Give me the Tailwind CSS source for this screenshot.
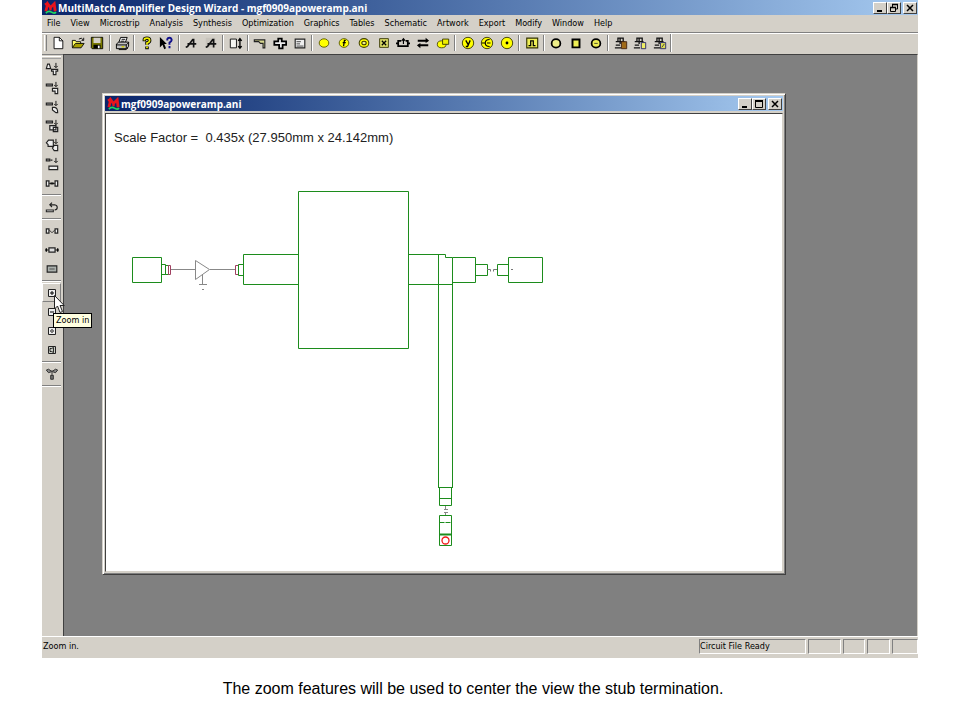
<!DOCTYPE html>
<html lang="en">
<head>
    <meta charset="UTF-8">
    <meta name="viewport" content="width=device-width, initial-scale=1.0">
    <title>MultiMatch Amplifier Design Wizard</title>
    <script src="https://cdn.jsdelivr.net/npm/@tailwindcss/browser@4"></script>
</head>
<body class="min-h-screen flex flex-col bg-white text-black">

    <!-- Shared logo -->
    <svg class="hidden">
        <symbol id="logo" viewBox="0 0 14 14">
            <path d="M2 11L4 3L7 7L11 3L12 11" fill="none" stroke="#e8141c" stroke-width="3"/>
            <path d="M1 4L4 2M7 6V10" stroke="#e8141c" stroke-width="2.5"/>
            <path d="M2 13Q5 10 8 12T13 12" fill="none" stroke="#20d860" stroke-width="1.8"/>
        </symbol>
    </svg>

    <!-- Application window -->
    <main class="mx-[42px] flex-1 flex flex-col bg-[#d4d0c8] text-[9px] font-['DejaVu_Sans_Condensed','DejaVu_Sans',sans-serif]">

        <!-- Title bar -->
        <header class="h-[15px] flex items-center bg-linear-to-r from-[#0a246a] to-[#a6caf0] pl-[2px] pr-[1px] text-white">
            <svg class="size-[13px] mr-[1px]"><use href="#logo"/></svg>
            <h1 class="text-[10px] leading-[14px] font-bold whitespace-nowrap font-['Open_Sans',sans-serif]">MultiMatch Amplifier Design Wizard - mgf0909apoweramp.ani</h1>
            <div class="ml-auto flex text-black">
                <button aria-label="Minimize" class="w-[14px] h-3 bg-[#d4d0c8] border border-t-white border-l-white border-b-[#404040] border-r-[#404040]"><svg class="w-3 h-[10px]" viewBox="0 0 12 10"><path d="M3 8H8" stroke="#000" stroke-width="2"/></svg></button>
                <button aria-label="Restore" class="w-[14px] h-3 bg-[#d4d0c8] border border-t-white border-l-white border-b-[#404040] border-r-[#404040]"><svg class="w-3 h-[10px]" viewBox="0 0 12 10"><path d="M4.5 4V1.5H9.5V6H8M2.5 4.5H7.5V8.5H2.5Z" fill="none" stroke="#000"/><path d="M4 1.5H10M2 4.5H8" stroke="#000" stroke-width="1.6"/></svg></button>
                <button aria-label="Close" class="ml-[2px] w-[14px] h-3 bg-[#d4d0c8] border border-t-white border-l-white border-b-[#404040] border-r-[#404040]"><svg class="w-3 h-[10px]" viewBox="0 0 12 10"><path d="M3 2L9 8M9 2L3 8" stroke="#000" stroke-width="1.5"/></svg></button>
            </div>
        </header>

        <!-- Menu -->
        <nav class="h-[18px] flex items-center gap-[10px] pl-[5px] pt-[1px] border-b border-[#808080]">
            <button>File</button>
            <button>View</button>
            <button>Microstrip</button>
            <button>Analysis</button>
            <button>Synthesis</button>
            <button>Optimization</button>
            <button>Graphics</button>
            <button>Tables</button>
            <button>Schematic</button>
            <button>Artwork</button>
            <button>Export</button>
            <button>Modify</button>
            <button>Window</button>
            <button>Help</button>
        </nav>

        <!-- Toolbar -->
        <div class="h-[21px] flex items-center border-t border-white pl-[2px] pb-[2px]">
            <div class="w-[3px] h-4 mr-[1px] border-l border-white border-r border-r-[#808080]"></div>
            <div class="w-[622px] flex items-center">
                <button aria-label="New" class="flex-1 flex justify-center"><svg class="size-[14px]" viewBox="0 0 16 16"><path d="M3.5 1.5H9.5L13.5 5.5V14.5H3.5Z" fill="#fff" stroke="#000"/><path d="M9.5 1.5V5.5H13.5" fill="none" stroke="#000"/></svg></button>
                <button aria-label="Open" class="flex-1 flex justify-center"><svg class="size-[14px]" viewBox="0 0 16 16"><path d="M1.5 13V5H5L6 6.5H11V8.5" fill="#ff6" stroke="#000"/><path d="M1.5 13.5L5 8.5H15L11.5 13.5Z" fill="#a8a000" stroke="#000"/><path d="M9 3.5Q12 1 14 4.5M14.5 2V5H12" fill="none" stroke="#000"/></svg></button>
                <button aria-label="Save" class="flex-1 flex justify-center"><svg class="size-[14px]" viewBox="0 0 16 16"><path d="M1.5 1.5H14.5V14.5H2.5L1.5 13.5Z" fill="#787800" stroke="#000"/><path d="M4 2H12V8H4Z" fill="#d4d0c8"/><path d="M4 10H12V14H4Z" fill="#000"/><path d="M9 11H11V14H9Z" fill="#fff"/></svg></button>
                <i class="w-[5px] flex justify-center"><i class="h-4 border-l border-[#808080] border-r border-r-white"></i></i>
                <button aria-label="Print" class="flex-1 flex justify-center"><svg class="size-[15px]" viewBox="0 0 16 16"><path d="M4 7L6 1.5H13L11 7" fill="#fff" stroke="#000"/><path d="M1.5 8.5L4 6.5H14.5V11L12 13.5H1.5Z" fill="#c0c0c0" stroke="#000"/><path d="M1.5 9.5H12V13.5M12 9.5L14.5 7M4 14.5H12L14 12.5M7 3.5H11M6 5.5H10" fill="none" stroke="#000"/><path d="M7 11.5H10" stroke="#cc0" stroke-width="1.5"/></svg></button>
                <i class="w-[5px] flex justify-center"><i class="h-4 border-l border-[#808080] border-r border-r-white"></i></i>
                <button aria-label="Help" class="flex-1 flex justify-center"><svg class="size-[14px]" viewBox="0 0 16 16"><path d="M5 6V4Q5 2.5 8 2.5T11 5Q11 7 8 8V10M8 12V15" fill="none" stroke="#000" stroke-width="4"/><path d="M5 5V4Q5 2.5 8 2.5T11 5Q11 7 8 8V10M8 12V14" fill="none" stroke="#ee0" stroke-width="2"/></svg></button>
                <button aria-label="Context help" class="flex-1 flex justify-center"><svg class="size-[14px]" viewBox="0 0 16 16"><path d="M1 1V13L4 10L6 15L8 14L6 9H9Z" fill="#000"/><path d="M9.5 5V3.5Q10 2 12 2T14.5 4.5Q14.5 6 12 7.5V10M12 11.5V14" fill="none" stroke="#10108c" stroke-width="2.2"/></svg></button>
                <i class="w-[5px] flex justify-center"><i class="h-4 border-l border-[#808080] border-r border-r-white"></i></i>
                <button aria-label="Analyze" class="flex-1 flex justify-center"><svg class="size-[14px]" viewBox="0 0 16 16"><path d="M2 13L4 12L10 4H11V13M4 9H14" fill="none" stroke="#111" stroke-width="1.9"/></svg></button>
                <button aria-label="Analyze all" class="flex-1 flex justify-center"><svg class="size-[14px]" viewBox="0 0 16 16"><path d="M2 2H13V13H2Z" fill="#c8c4bc"/><path d="M2 13L4 12L10 4H11V13M4 9H14" fill="none" stroke="#111" stroke-width="1.9"/></svg></button>
                <i class="w-[5px] flex justify-center"><i class="h-4 border-l border-[#808080] border-r border-r-white"></i></i>
                <button aria-label="Height" class="flex-1 flex justify-center"><svg class="size-[14px]" viewBox="0 0 16 16"><path d="M1.5 3.5H8.5V13.5H1.5Z" fill="#f4f4f0" stroke="#000"/><path d="M12.5 4V13M10.5 5.5L12.5 3L14.5 5.5M10.5 11.5L12.5 14L14.5 11.5" fill="none" stroke="#000" stroke-width="1.5"/></svg></button>
                <i class="w-[5px] flex justify-center"><i class="h-4 border-l border-[#808080] border-r border-r-white"></i></i>
                <button aria-label="Bend" class="flex-1 flex justify-center"><svg class="size-[14px]" viewBox="0 0 16 16"><path d="M1.5 6.5V4.5H13.5V13.5H11.5V8.5H8.5L6.5 6.5Z" fill="#d8d890" stroke="#222" stroke-width="1.3"/></svg></button>
                <button aria-label="Cross" class="flex-1 flex justify-center"><svg class="size-[14px]" viewBox="0 0 16 16"><path d="M6 3H10V6H15V10H11V14H7V10H1.5V6H6Z" fill="#eee" stroke="#000" stroke-width="2"/></svg></button>
                <button aria-label="Properties" class="flex-1 flex justify-center"><svg class="size-[14px]" viewBox="0 0 16 16"><path d="M2.5 3.5H13.5V13.5H2.5Z" fill="#eee" stroke="#222" stroke-width="1.3"/><path d="M4 6.5H9M4 9H8M4 11.5H12" stroke="#333"/></svg></button>
                <i class="w-[5px] flex justify-center"><i class="h-4 border-l border-[#808080] border-r border-r-white"></i></i>
                <button aria-label="Circle" class="flex-1 flex justify-center"><svg class="size-[14px]" viewBox="0 0 16 16"><ellipse cx="8" cy="8" rx="5.5" ry="4.8" fill="#ff0" stroke="#550"/></svg></button>
                <button aria-label="Circle f" class="flex-1 flex justify-center"><svg class="size-[14px]" viewBox="0 0 16 16"><ellipse cx="8" cy="8" rx="5.5" ry="5" fill="#ff0" stroke="#550"/><path d="M10 5H8.5L7.5 11.5M6.5 7.5H10" fill="none" stroke="#000" stroke-width="1.4"/></svg></button>
                <button aria-label="Rings" class="flex-1 flex justify-center"><svg class="size-[14px]" viewBox="0 0 16 16"><ellipse cx="8" cy="8" rx="5.5" ry="5" fill="#ff0" stroke="#440" stroke-width="1.2"/><ellipse cx="8" cy="8" rx="2.5" ry="2" fill="#ee8" stroke="#330" stroke-width="1.2"/></svg></button>
                <button aria-label="Crossed box" class="flex-1 flex justify-center"><svg class="size-[14px]" viewBox="0 0 16 16"><path d="M3 3H13V13H3Z" fill="#dd6" stroke="#330"/><path d="M5.5 5.5L10.5 10.5M10.5 5.5L5.5 10.5" stroke="#000" stroke-width="1.5"/></svg></button>
                <button aria-label="Import" class="flex-1 flex justify-center"><svg class="size-[14px]" viewBox="0 0 16 16"><path d="M6 5.5H2.5V11.5H13.5V5.5H11M0 8.5H2M14 8.5H16" fill="none" stroke="#000" stroke-width="2"/><path d="M8.5 3V9M6.5 5.5L8.5 3L10.5 5.5" fill="none" stroke="#000" stroke-width="1.3"/></svg></button>
                <button aria-label="Swap" class="flex-1 flex justify-center"><svg class="size-[14px]" viewBox="0 0 16 16"><path d="M2 5.5H13M3 10.5H14" stroke="#000" stroke-width="2.2"/><path d="M11 2L15 5.5L11 8ZM5 8L1 10.5L5 14Z" fill="#000"/></svg></button>
                <button aria-label="Copy shape" class="flex-1 flex justify-center"><svg class="size-[14px]" viewBox="0 0 16 16"><ellipse cx="6.5" cy="9.5" rx="5" ry="4" fill="#ff0" stroke="#440"/><path d="M7.5 3.5H14.5V9.5H7.5Z" fill="#ee0" stroke="#330"/></svg></button>
                <i class="w-[5px] flex justify-center"><i class="h-4 border-l border-[#808080] border-r border-r-white"></i></i>
                <button aria-label="Y parameters" class="flex-1 flex justify-center"><svg class="size-[14px]" viewBox="0 0 16 16"><circle cx="8" cy="8" r="6.5" fill="#ff0" stroke="#330"/><path d="M5.5 5L8 9.5M10.5 5L7.5 12H5.5" fill="none" stroke="#000" stroke-width="1.5"/></svg></button>
                <button aria-label="Smith chart" class="flex-1 flex justify-center"><svg class="size-[14px]" viewBox="0 0 16 16"><circle cx="8" cy="8" r="6.5" fill="#ff0" stroke="#330"/><path d="M2 8H6M11 4Q6 4 6 8T11 12M8 8H12" fill="none" stroke="#000" stroke-width="1.3"/></svg></button>
                <button aria-label="Center" class="flex-1 flex justify-center"><svg class="size-[14px]" viewBox="0 0 16 16"><circle cx="8" cy="8" r="6.5" fill="#ff0" stroke="#330"/><circle cx="8" cy="8" r="1.6" fill="#000"/></svg></button>
                <i class="w-[5px] flex justify-center"><i class="h-4 border-l border-[#808080] border-r border-r-white"></i></i>
                <button aria-label="Pulse" class="flex-1 flex justify-center"><svg class="size-[14px]" viewBox="0 0 16 16"><path d="M2 2.5H14.5V13.5H2Z" fill="#ee5" stroke="#330" stroke-width="1.3"/><path d="M4 11H6.5V5.5H9.5V11H12" fill="none" stroke="#000" stroke-width="1.4"/></svg></button>
                <i class="w-[5px] flex justify-center"><i class="h-4 border-l border-[#808080] border-r border-r-white"></i></i>
                <button aria-label="Round pad" class="flex-1 flex justify-center"><svg class="size-[14px]" viewBox="0 0 16 16"><ellipse cx="8" cy="8.5" rx="5" ry="4.8" fill="#ee8" stroke="#000" stroke-width="2"/></svg></button>
                <button aria-label="Square pad" class="flex-1 flex justify-center"><svg class="size-[14px]" viewBox="0 0 16 16"><path d="M4 4H12V13H4Z" fill="#ee5" stroke="#000" stroke-width="2.2"/></svg></button>
                <button aria-label="Slot pad" class="flex-1 flex justify-center"><svg class="size-[14px]" viewBox="0 0 16 16"><ellipse cx="8" cy="8.5" rx="5" ry="4.8" fill="#ee5" stroke="#000" stroke-width="2"/><path d="M6 8.5H10" stroke="#663" stroke-width="1.3"/></svg></button>
                <i class="w-[5px] flex justify-center"><i class="h-4 border-l border-[#808080] border-r border-r-white"></i></i>
                <button aria-label="Paste layout" class="flex-1 flex justify-center"><svg class="size-[14px]" viewBox="0 0 16 16"><path d="M4.5 6V2.5H10.5V6M2 6.5H12M7 3V9M2 10.5H7M1 13.5H8" fill="none" stroke="#111" stroke-width="1.5"/><path d="M8.500 6.500H14.500V14.500H8.500Z" fill="#a06a18" stroke="#402010"/></svg></button>
                <button aria-label="Copy layout" class="flex-1 flex justify-center"><svg class="size-[14px]" viewBox="0 0 16 16"><path d="M4.5 6V2.5H10.5V6M2 6.5H12M7 3V9M2 10.5H7M1 13.5H8" fill="none" stroke="#111" stroke-width="1.5"/><path d="M9.5 7.5H14.5V14.5H9.5Z" fill="#ee6" stroke="#226"/></svg></button>
                <button aria-label="Edit layout" class="flex-1 flex justify-center"><svg class="size-[14px]" viewBox="0 0 16 16"><path d="M4.5 6V2.5H10.5V6M2 6.5H12M7 3V9M2 10.5H7M1 13.5H8" fill="none" stroke="#111" stroke-width="1.5"/><path d="M8.5 7.5H14.5V14.5H8.5Z" fill="#dd5" stroke="#226"/><path d="M10 13L13 9" stroke="#333"/></svg></button>
            </div>
            <div class="h-[18px] border-l border-[#808080] border-r border-r-white"></div>
        </div>

        <div class="flex-1 flex">
            <!-- Side toolbar -->
            <div class="relative w-[21px] flex flex-col border-t border-[#808080] pr-[2px]">
                <div class="h-[3px] mt-[1px] border-t border-white border-b border-b-[#a0a0a0]"></div>
                <button aria-label="Add tee" class="h-[19px] flex items-center justify-center"><svg class="size-[14px]" viewBox="0 0 16 16"><path d="M1.5 7.5L3 2.5H5L6.5 7.5ZM7.5 8.5H14.5V10.5H12.5V14.5H9.5V10.5H7.5Z" fill="#eee" stroke="#222" stroke-width="1.3"/><path d="M12.5 1V6M10.5 4.5L12.5 6.5L14.5 4.5" fill="none" stroke="#000"/></svg></button>
                <button aria-label="Add bend" class="h-[19px] flex items-center justify-center"><svg class="size-[14px]" viewBox="0 0 16 16"><path d="M1.5 3.5H8.5V5.5H1.5ZM8.5 8.5H14.5V14.5H11.5V11.5H8.5Z" fill="#eee" stroke="#222" stroke-width="1.3"/><path d="M12.5 1V6M10.5 4.5L12.5 6.5L14.5 4.5" fill="none" stroke="#000"/></svg></button>
                <button aria-label="Add curve" class="h-[19px] flex items-center justify-center"><svg class="size-[14px]" viewBox="0 0 16 16"><path d="M1.5 3.5H8.5V5.5H1.5ZM8.5 8.5H11Q14.5 9 14.5 14.5H12.5L8.5 11.5Z" fill="#eee" stroke="#222" stroke-width="1.3"/><path d="M12.5 1V6M10.5 4.5L12.5 6.5L14.5 4.5" fill="none" stroke="#000"/></svg></button>
                <button aria-label="Add cross" class="h-[19px] flex items-center justify-center"><svg class="size-[14px]" viewBox="0 0 16 16"><path d="M1.5 2.5H8.5V4.5H1.5ZM5.5 7.5H12.5V12.5H5.5ZM9.5 9.5H14.5V14.5H9.5Z" fill="#eee" stroke="#222" stroke-width="1.4"/><path d="M12.5 1V6M10.5 4.5L12.5 6.5L14.5 4.5" fill="none" stroke="#000"/></svg></button>
                <button aria-label="Add polygon" class="h-[19px] flex items-center justify-center"><svg class="size-[14px]" viewBox="0 0 16 16"><path d="M1.5 5.5L4 2.5H9.5V9.5H3.5V7.5ZM8.5 11.5L10.5 8.5H14.5V14.5H10.5Z" fill="#eee" stroke="#222" stroke-width="1.3"/><path d="M12.5 1V6M10.5 4.5L12.5 6.5L14.5 4.5" fill="none" stroke="#000"/></svg></button>
                <button aria-label="Add line" class="h-[19px] flex items-center justify-center"><svg class="size-[14px]" viewBox="0 0 16 16"><path d="M1.5 2.5H5.5V4.5H1.5ZM6.5 3.5H8.5M4.5 10.5H14.5V14.5H4.5Z" fill="#eee" stroke="#222" stroke-width="1.3"/><path d="M12.5 1V6M10.5 4.5L12.5 6.5L14.5 4.5" fill="none" stroke="#000"/></svg></button>
                <button aria-label="Gap" class="h-[19px] flex items-center justify-center"><svg class="size-[14px]" viewBox="0 0 16 16"><path d="M1.5 5.5H4.5V11.5H1.5ZM11.5 5.5H14.5V11.5H11.5Z" fill="#eee" stroke="#222" stroke-width="1.4"/><path d="M5 8.5H11M7 7V10M9 7V10" stroke="#000"/></svg></button>
                <i class="h-[5px] flex flex-col justify-center"><i class="border-t border-[#808080] border-b border-b-white"></i></i>
                <button aria-label="Undo" class="h-[19px] flex items-center justify-center"><svg class="size-[14px]" viewBox="0 0 16 16"><path d="M1.5 11.5H9.5V13.5H1.5Z" fill="#eee" stroke="#222" stroke-width="1.2"/><path d="M6 5.500H11Q14 6 14 8.5T11 11.5M8 3L5.5 5.5L8 8" fill="none" stroke="#222" stroke-width="1.3"/></svg></button>
                <i class="h-[5px] flex flex-col justify-center"><i class="border-t border-[#808080] border-b border-b-white"></i></i>
                <button aria-label="Link" class="h-[19px] flex items-center justify-center"><svg class="size-[14px]" viewBox="0 0 16 16"><path d="M1.5 5.5H4.5V10.5H1.5ZM11.5 5.5H14.5V10.5H11.5Z" fill="#eee" stroke="#222" stroke-width="1.4"/><path d="M5 7L8 10L11 7" fill="none" stroke="#222"/></svg></button>
                <button aria-label="Stretch" class="h-[19px] flex items-center justify-center"><svg class="size-[14px]" viewBox="0 0 16 16"><path d="M4.5 5.5H11.5V10.5H4.5Z" fill="#ddd" stroke="#222" stroke-width="1.4"/><path d="M0 8H4M12 8H16M1.5 6V10M14.5 6V10" stroke="#000" stroke-width="1.4"/></svg></button>
                <button aria-label="Block" class="h-[19px] flex items-center justify-center"><svg class="size-[14px]" viewBox="0 0 16 16"><path d="M2.5 4.5H13.5V11.5H2.5Z" fill="#aab0ac" stroke="#222" stroke-width="1.3"/><path d="M5 8H11" stroke="#444"/></svg></button>
                <i class="h-[5px] flex flex-col justify-center"><i class="border-t border-[#808080] border-b border-b-white"></i></i>
                <button aria-label="Zoom in" class="h-[19px] flex items-center justify-center border border-t-white border-l-white border-b-[#808080] border-r-[#808080]"><svg class="size-[14px]" viewBox="0 0 14 14"><path d="M3.5 3.5H10.5V10.5H3.5Z" fill="#eee" stroke="#222"/><path d="M5 7H9M7 5V9" stroke="#000"/></svg></button>
                <button aria-label="Zoom out" class="h-[19px] flex items-center justify-center"><svg class="size-[14px]" viewBox="0 0 14 14"><path d="M3.5 3.5H10.5V10.5H3.5Z" fill="#eee" stroke="#222"/><path d="M5 7H9" stroke="#000"/></svg></button>
                <button aria-label="Zoom full" class="h-[19px] flex items-center justify-center"><svg class="size-[14px]" viewBox="0 0 14 14"><path d="M3.5 3.5H10.5V10.5H3.5Z" fill="#eee" stroke="#222"/><circle cx="7" cy="7" r="1.3" fill="none" stroke="#000" stroke-width=".8"/></svg></button>
                <button aria-label="Zoom window" class="h-[19px] flex items-center justify-center"><svg class="size-[14px]" viewBox="0 0 14 14"><path d="M3.500 3.500H10.500V10.500H3.500Z" fill="#c8ccc4" stroke="#222"/><path d="M5 5.500H6.500L8.500 4.500V9.500L6.500 8.500H5Z" fill="none" stroke="#000" stroke-width=".8"/></svg></button>
                <i class="h-[5px] flex flex-col justify-center"><i class="border-t border-[#808080] border-b border-b-white"></i></i>
                <button aria-label="Tee" class="h-[19px] flex items-center justify-center"><svg class="size-[14px]" viewBox="0 0 16 16"><path d="M1.5 3.5L4 2.5L7 4.5H9L12 2.5L14.5 3.5L12 6.5L9 5.5H7L4 6.5Z" fill="#888" stroke="#222"/><path d="M6.5 9.5H9.5V14H6.5ZM8 6V9" fill="#777" stroke="#222"/></svg></button>
                <i class="h-[5px] flex flex-col justify-center"><i class="border-t border-[#808080] border-b border-b-white"></i></i>

                <!-- Tooltip and mouse pointer -->
                <div role="tooltip" class="absolute z-10 left-[11px] top-[258px] h-[15px] px-[2px] leading-[13px] border border-black bg-[#ffffe1] whitespace-nowrap">Zoom in</div>
                <svg class="absolute z-20 left-3 top-[240px] w-[11px] h-[19px]" viewBox="0 0 11 19"><path d="M.5 .5V14L3.5 11L6 17.5L8.5 16.5L6 10.5H10.2Z" fill="#fff" stroke="#222"/></svg>
            </div>

            <!-- Workspace -->
            <div class="relative flex-1 bg-[#808080] border-t border-l border-[#404040] border-r border-r-[#d4d0c8]">
                <section class="absolute left-[38px] right-[131px] top-[38px] bottom-[61px] flex flex-col bg-[#d4d0c8] p-[2px] border border-[#d4d0c8] border-b-[#404040] border-r-[#404040] shadow-[inset_1px_1px_0_#fff,inset_-1px_-1px_0_#808080]">
                    <header class="h-[15px] shrink-0 flex items-center bg-linear-to-r from-[#0a246a] to-[#a6caf0] pl-[2px] pr-[1px] text-white">
                        <svg class="size-[13px] mr-[1px]"><use href="#logo"/></svg>
                        <h2 class="text-[10px] leading-[14px] font-bold font-['Open_Sans',sans-serif]">mgf0909apoweramp.ani</h2>
                        <div class="ml-auto flex">
                            <button aria-label="Minimize drawing" class="w-[14px] h-3 bg-[#d4d0c8] border border-t-white border-l-white border-b-[#404040] border-r-[#404040]"><svg class="w-3 h-[10px]" viewBox="0 0 12 10"><path d="M3 8H8" stroke="#000" stroke-width="2"/></svg></button>
                            <button aria-label="Maximize drawing" class="w-[14px] h-3 bg-[#d4d0c8] border border-t-white border-l-white border-b-[#404040] border-r-[#404040]"><svg class="w-3 h-[10px]" viewBox="0 0 12 10"><path d="M2.5 1.5H9.5V8.5H2.5Z" fill="none" stroke="#000"/><path d="M2 2H10" stroke="#000" stroke-width="2"/></svg></button>
                            <button aria-label="Close drawing" class="ml-[2px] w-[14px] h-3 bg-[#d4d0c8] border border-t-white border-l-white border-b-[#404040] border-r-[#404040]"><svg class="w-3 h-[10px]" viewBox="0 0 12 10"><path d="M3 2L9 8M9 2L3 8" stroke="#000" stroke-width="1.5"/></svg></button>
                        </div>
                    </header>
                    <div class="mt-[2px] flex-1 bg-white border-t border-l border-[#404040] border-r border-b border-r-[#d4d0c8] border-b-[#d4d0c8] pl-2 pt-4">
                        <p class="text-[13px] leading-4 whitespace-pre text-[#222] font-['Liberation_Sans',Arial,sans-serif]">Scale Factor =  0.435x (27.950mm x 24.142mm)</p>
                        <!-- Microstrip artwork -->
                        <svg class="mt-[34px] w-[446px] h-[370px]" viewBox="114 180 446 370" fill="none" stroke="#1c8c1c">
                            <path d="M132.5 257.5H161.5V282.5H132.5ZM161.5 264.5H165.5V274.5H161.5ZM165.5 265.5H168.5V274.5H165.5Z"/>
                            <path d="M168.5 265.5H170.5V274.5H168.5ZM235.5 265.5H238.5V274.5H235.5Z" stroke="#a04060"/>
                            <path d="M171 269.5H195.5M210 269.5H235M195.5 260.5V279.5L209.5 269.5ZM202.5 275V284.5M199 284.5H207M202 289.5H204" stroke="#888"/>
                            <path d="M238.5 264.5H243.5V275.5H238.5ZM243.5 254.5H298.5V284.5H243.5Z"/>
                            <path d="M298.5 191.5H408.5V348.5H298.5Z"/>
                            <path d="M408.5 254.5H445.5V257.5H452.5V487.5M408.5 284.5H452.5M438.5 254.5V487.5M438 487.5H453"/>
                            <path d="M452.5 257.5H475.5V282.5H452.5M475.5 264.5H487.5V275.5H475.5M508.5 264.5H497.5V275.5H508.5M508.5 257.5H542.5V282.5H508.5Z"/>
                            <path d="M487 269.5H490.5V271.5M493.5 271.5V269.5H497M511 269.5H513" stroke="#777"/>
                            <path d="M439.5 487.5V505.5H451.5V487.5M439.5 498.5H451.5M439.5 515.5H451.5V545.5H439.5Z"/>
                            <path d="M439 534.5H452" stroke-width="2"/>
                            <path d="M439.5 522.5H451.5" stroke-dasharray="5 1"/>
                            <path d="M445.5 506V509.5M444 509.5H448M444 512.5H448M445.5 512V515" stroke="#888"/>
                            <circle cx="445.5" cy="540.5" r="3.500" stroke="#f01818" stroke-width="1.3"/>
                        </svg>
                    </div>
                </section>
            </div>
        </div>

        <!-- Status bar -->
        <footer class="h-[22px] flex border-t border-white pt-[2px] pb-1 leading-[14px]">
            <span class="flex-1 pl-[1px]">Zoom in.</span>
            <div class="flex gap-[2px]">
                <span class="w-[107px] border border-[#808080] border-b-white border-r-white leading-[13px]">Circuit File Ready</span>
                <span class="w-[33px] border border-[#808080] border-b-white border-r-white"></span>
                <span class="w-[22px] border border-[#808080] border-b-white border-r-white"></span>
                <span class="w-[23px] border border-[#808080] border-b-white border-r-white"></span>
                <span class="w-[26px] border border-[#808080] border-b-white border-r-white"></span>
            </div>
        </footer>
    </main>

    <!-- Caption -->
    <p class="h-[62px] pt-[21px] pr-[14px] text-center text-[16px] leading-5 font-['Liberation_Sans',Arial,sans-serif]">The zoom features will be used to center the view the stub termination.</p>

</body>
</html>
